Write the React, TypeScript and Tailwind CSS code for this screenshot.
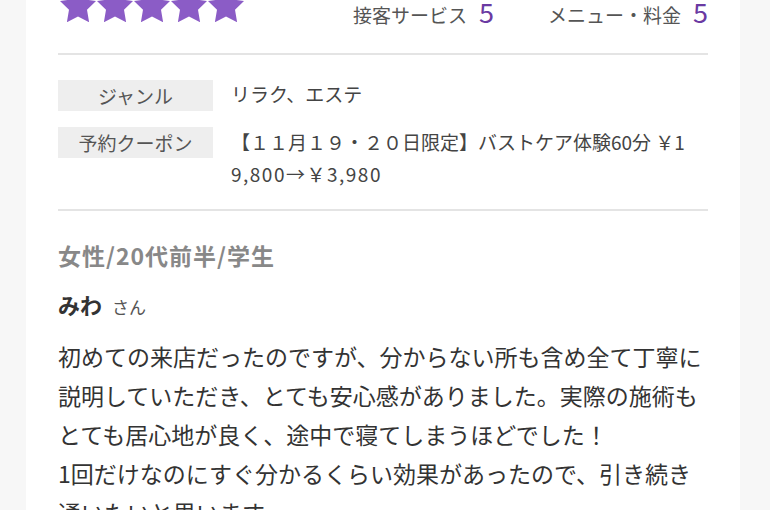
import React from 'react';

const FONT = '"Noto Sans CJK JP", "Noto Sans", sans-serif';

const STAR = '12,2 15.09,8.26 22,9.27 17,14.14 18.18,21.02 12,17.77 5.82,21.02 7,14.14 2,9.27 8.91,8.26';

function Stars() {
  return (
    <svg width="185" height="35" viewBox="0 0 185 35" className="block">
      {[0, 1, 2, 3, 4].map(i => (
        <g key={i} transform={`translate(${i * 37 - 3.6}, ${-3.6}) scale(1.8)`}>
          <polygon points={STAR} fill="#8b5cc6" />
        </g>
      ))}
    </svg>
  );
}

function Rating({ label, value }: { label: string; value: number }) {
  return (
    <div className="flex items-baseline gap-[12px]">
      <span className="text-[19px] leading-[30px] text-[#555]">{label}</span>
      <span className="text-[27px] leading-[30px] text-[#6a3aa2]">{value}</span>
    </div>
  );
}

export default function App() {
  return (
    <div className="h-[510px] overflow-hidden bg-[#f7f7f7] px-[26px]" style={{ fontFamily: FONT }}>
      <div className="flex h-full w-[714px] flex-col bg-white px-[32px]">
        <div className="-mt-[12px] flex h-[67px] shrink-0 items-start justify-between border-b-2 border-[#e4e4e4] pl-[2px]">
          <Stars />
          <div className="mt-[9px] flex gap-[54px]">
            <Rating label="接客サービス" value={5} />
            <Rating label="メニュー・料金" value={5} />
          </div>
        </div>

        <div className="mt-[25px] flex shrink-0 flex-col gap-[16px] border-b-2 border-[#e4e4e4] pb-[19px]">
          <div className="flex gap-[18px]">
            <div className="h-[31px] w-[155px] shrink-0 bg-[#eeeeee] text-center text-[19px] leading-[31px] text-[#555]">ジャンル</div>
            <div className="text-[19px] leading-[28px] text-[#444]">リラク、エステ</div>
          </div>
          <div className="flex gap-[18px]">
            <div className="h-[31px] w-[155px] shrink-0 bg-[#eeeeee] text-center text-[19px] leading-[31px] text-[#555]">予約クーポン</div>
            <div className="-mt-[1px] text-[19px] leading-[32px] text-[#444]">
              【１１月１９・２０日限定】バストケア体験60分 ￥1
              <br />
              <span className="tracking-[1.5px]">9,800→￥3,980</span>
            </div>
          </div>
        </div>

        <div className="mt-[29px] shrink-0 text-[23px] font-bold leading-[30px] tracking-[1px] text-[#888]">女性/20代前半/学生</div>

        <div className="mt-[19px] flex shrink-0 items-baseline gap-[10px] leading-[30px]">
          <span className="text-[22px] font-bold text-[#333]">みわ</span>
          <span className="text-[17px] text-[#555]">さん</span>
        </div>

        <p className="mt-[15px] shrink-0 text-[23px] leading-[39px] text-[#333]">
          初めての来店だったのですが、分からない所も含め全て丁寧に説明していただき、とても安心感がありました。実際の施術もとても居心地が良く、途中で寝てしまうほどでした！
          <br />
          1回だけなのにすぐ分かるくらい効果があったので、引き続き通いたいと思います。
        </p>
      </div>
    </div>
  );
}
